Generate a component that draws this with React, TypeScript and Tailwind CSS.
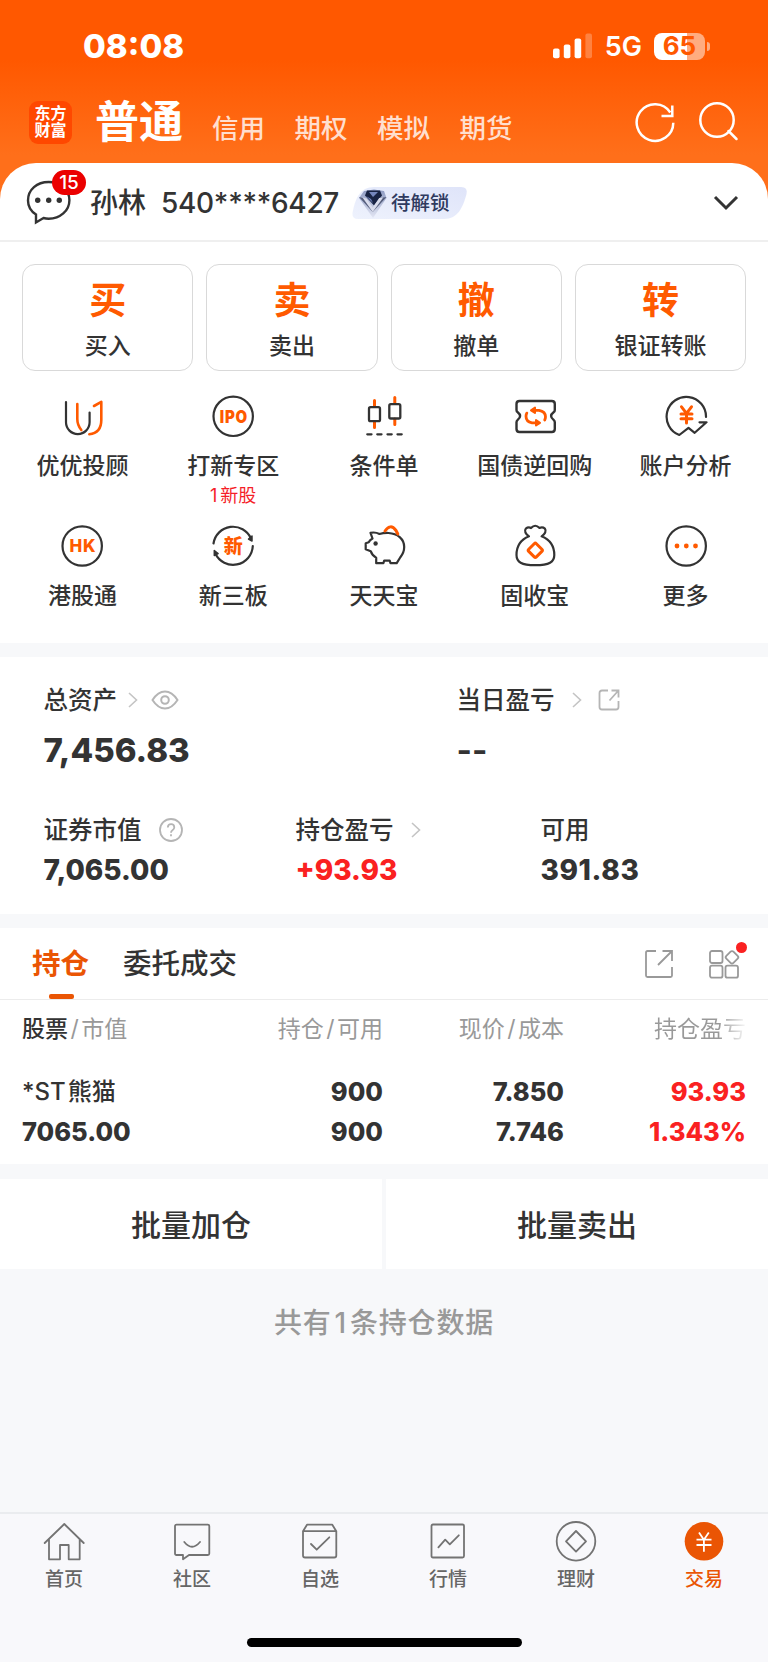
import React from 'react';
import clsx from 'clsx';

const INK = '#333333';
const ORANGE = '#ff5a00';

interface IconProps {
  className?: string;
  children: React.ReactNode;
}

/** 44px line icon canvas shared by the shortcut grid, header and tab bar */
function Icon({ className, children }: IconProps) {
  return (
    <svg
      width="44"
      height="44"
      viewBox="0 0 44 44"
      fill="none"
      strokeLinecap="round"
      strokeLinejoin="round"
      className={clsx('block shrink-0', className)}
      aria-hidden
    >
      {children}
    </svg>
  );
}

function AdvisorIcon() {
  return (
    <Icon>
      <path d="M6 8V28.3a11.8 11.8 0 0 0 23.6 0V18.5" stroke={INK} strokeWidth="2.2" />
      <path d="M17.3 10V25q0 6 4 11" stroke={ORANGE} strokeWidth="2.6" />
      <path d="M34 12l7.3-4.2V26q0 13-12 14.2" stroke={ORANGE} strokeWidth="2.6" />
    </Icon>
  );
}

function IpoIcon() {
  return (
    <Icon>
      <circle cx="22.2" cy="22.3" r="19.7" stroke={INK} strokeWidth="2.2" />
      <text
        x="8.8"
        y="28.5"
        textLength="28"
        lengthAdjust="spacingAndGlyphs"
        fontSize="17"
        fontWeight="900"
        letterSpacing="0.8"
        fill={ORANGE}
      >
        IPO
      </text>
    </Icon>
  );
}

function ConditionIcon() {
  return (
    <Icon>
      <path d="M12.5 6.5V12M12.5 28v5.5M32.8 3.5V9M32.8 25v5.5" stroke={ORANGE} strokeWidth="3" />
      <rect x="7" y="13.2" width="11" height="14" rx="1.5" stroke={INK} strokeWidth="2.3" />
      <rect x="27.3" y="10.2" width="11" height="14.3" rx="1.5" stroke={INK} strokeWidth="2.3" />
      <path d="M5.3 40.3h4.2M15.3 40.3h4.2M25.5 40.3h4.2M35.5 40.3h4.2" stroke={INK} strokeWidth="2.3" />
    </Icon>
  );
}

function RepoIcon() {
  return (
    <Icon>
      <path
        d="M6.5 7H38.8q3 0 3 3v6q0 1.5-1.2 2.3-5 3.7 0 7.6 1.2.9 1.2 2.4V35q0 3-3 3H6.5q-3 0-3-3v-6.7q0-1.5 1.2-2.4 4.8-3.9 0-7.6Q3.5 17.5 3.5 16v-6q0-3 3-3z"
        stroke={INK}
        strokeWidth="2.4"
      />
      <path d="M20 16.3h6q6.5 1 6.5 6.5 0 1.7-.8 3.2M25 28.8h-6q-6-1-6-6.5 0-1.7.8-3.2" stroke={ORANGE} strokeWidth="2.8" />
      <path d="M22 13.6v5.4l-4-2.7zM23 26.1v5.4l4-2.7z" fill={ORANGE} stroke={ORANGE} strokeWidth="2" />
    </Icon>
  );
}

function AnalysisIcon() {
  return (
    <Icon>
      <path d="M42 23A19.7 19.7 0 1 0 15.3 41l9.2-7.2 6.2 5L42.5 28.3H35.5" stroke={INK} strokeWidth="2.2" />
      <path d="M17.5 12.8l5 6.5 5-6.5M17 20h11M17 24.8h11M22.5 19.5V29" stroke={ORANGE} strokeWidth="3" />
    </Icon>
  );
}

function HkIcon() {
  return (
    <Icon>
      <circle cx="22.2" cy="22" r="19.7" stroke={INK} strokeWidth="2.2" />
      <text
        x="9.6"
        y="28.2"
        textLength="26.5"
        lengthAdjust="spacingAndGlyphs"
        fontSize="17.5"
        fontWeight="800"
        letterSpacing="0.6"
        fill={ORANGE}
      >
        HK
      </text>
    </Icon>
  );
}

function NeeqIcon() {
  return (
    <Icon>
      <path d="M2.5 19.5A19.7 19.7 0 0 1 40 14.5M41.8 22A19.7 19.7 0 0 1 4.3 29.5" stroke={INK} strokeWidth="2.2" />
      <path d="M41 12v5l-3.5-2zM3.3 26.5v5l3.8-2z" fill={INK} stroke={INK} strokeWidth="1.5" />
      <text x="22.2" y="28.9" textAnchor="middle" fontSize="19" fontWeight="800" fill={ORANGE}>
        新
      </text>
    </Icon>
  );
}

function PiggyIcon() {
  return (
    <Icon>
      <path
        d="M10.5 14.5L8.5 8.8q5-1 9 1.2 4-1.2 9-1c9 .5 15.7 6 15.7 14 0 5-2 8-4 10.5l-3.5 5.7h-6.2l-.8-2.5h-5.5l-.8 2.5h-7.2v-5.5q-4-2-5.5-6.5l-5-2v-6l3-1q1-2.2 3.8-3.7z"
        stroke={INK}
        strokeWidth="2.2"
      />
      <circle cx="13.6" cy="19.5" r="2.2" fill={INK} />
      <path d="M23 7q5.5-8 11-.5l1.8 3.5" stroke={ORANGE} strokeWidth="3" />
    </Icon>
  );
}

function MoneyBagIcon() {
  return (
    <Icon>
      <path
        d="M16 12.3C12.5 10 11 7 12.8 4.6q2.6-2 5.2-.6 4.2-4.5 8.5 0 3-1.4 5.4.6c1.7 2.4.2 5.4-3.3 7.7 9 3.7 12.7 9.7 12.7 18.7 0 7-5 10.2-19 10.2S3.5 38 3.5 31C3.5 22 7 16 16 12.3z"
        stroke={INK}
        strokeWidth="2.2"
      />
      <rect x="16.9" y="20.9" width="10.8" height="10.8" rx="1.5" transform="rotate(45 22.3 26.3)" stroke={ORANGE} strokeWidth="3" />
    </Icon>
  );
}

function MoreIcon() {
  return (
    <Icon>
      <circle cx="22.2" cy="22" r="19.7" stroke={INK} strokeWidth="2.2" />
      <g fill={ORANGE}>
        <circle cx="13" cy="22" r="2.4" />
        <circle cx="22.3" cy="22" r="2.4" />
        <circle cx="31.5" cy="22" r="2.4" />
      </g>
    </Icon>
  );
}

const MARKETS = ['信用', '期权', '模拟', '期货'];

const ACTIONS = [
  { mark: '买', label: '买入' },
  { mark: '卖', label: '卖出' },
  { mark: '撤', label: '撤单' },
  { mark: '转', label: '银证转账' },
];

const SHORTCUTS = [
  { label: '优优投顾', icon: <AdvisorIcon /> },
  { label: '打新专区', icon: <IpoIcon />, note: { count: 1, text: '新股' } },
  { label: '条件单', icon: <ConditionIcon /> },
  { label: '国债逆回购', icon: <RepoIcon /> },
  { label: '账户分析', icon: <AnalysisIcon /> },
  { label: '港股通', icon: <HkIcon /> },
  { label: '新三板', icon: <NeeqIcon /> },
  { label: '天天宝', icon: <PiggyIcon /> },
  { label: '固收宝', icon: <MoneyBagIcon /> },
  { label: '更多', icon: <MoreIcon /> },
];

const TABS = [
  {
    label: '首页',
    icon: <path d="M2.7 24L22.3 5 41.7 24M7 20.5V40.3H18V26h8.7v14.3h11V20.5" />,
  },
  {
    label: '社区',
    icon: <path d="M6.5 5.7h31.3q1.5 0 1.5 1.5v27.3q0 1.5-1.5 1.5H19l-6 4.3V36H6.5Q5 36 5 34.5V7.2q0-1.5 1.5-1.5zM14.3 23q7.7 9.5 15.7 0" />,
  },
  {
    label: '自选',
    icon: <path d="M5 12.2h33.3v24.3q0 2-2 2H7q-2 0-2-2zM5 12.2l4-6.5h25.3l4 6.5M13 25l5.7 5.7 12.6-12.4" />,
  },
  {
    label: '行情',
    icon: <path d="M7 5.5h29.5q1.5 0 1.5 1.5v30q0 1.5-1.5 1.5H7q-1.5 0-1.5-1.5V7Q5.5 5.5 7 5.5zM12.4 28.3l6.8-7.6 4.6 4.6 9-9" />,
  },
  {
    label: '理财',
    icon: (
      <>
        <circle cx="22" cy="22.3" r="19.3" />
        <path d="M22 12l10 10.3-10 10.3-10-10.3z" />
      </>
    ),
  },
];

function StatusBar() {
  return (
    <div className="flex h-[92px] items-center pl-[83px] pr-[58px] text-white">
      <span className="text-[33px] leading-none font-extrabold">08:08</span>
      <svg width="40" height="26" viewBox="0 0 40 26" fill="#fff" className="ml-auto" aria-hidden>
        <rect x="0" y="15.5" width="6.6" height="9.8" rx="2" />
        <rect x="10.8" y="11.5" width="6.6" height="13.8" rx="2" />
        <rect x="21.6" y="5.5" width="6.6" height="19.8" rx="2" />
        <rect x="32.4" y="0.5" width="6.6" height="24.8" rx="2" opacity="0.25" />
      </svg>
      <span className="ml-3 text-[27px] leading-none font-semibold">5G</span>
      <div className="ml-3 flex h-[27px] w-[51px] items-center justify-center rounded-[8px] bg-[linear-gradient(90deg,#fff_33px,#ffac80_33px)] text-[26px] leading-none font-bold text-[#ff5800]">
        65
      </div>
      <div className="ml-[2px] h-[9px] w-[3px] rounded-r-full bg-white/50" />
    </div>
  );
}

function MarketBar() {
  return (
    <div className="flex h-[60px] items-center pl-[29px] pr-[27px] text-white">
      <div className="flex h-[43px] w-[43px] flex-col items-center justify-center rounded-[9px] bg-[#ff4800] text-[16px] leading-[17.5px] font-bold">
        <span>东方</span>
        <span>财富</span>
      </div>
      <h1 className="ml-[23px] text-[44px] leading-none font-bold">普通</h1>
      <div className="mt-[13px] ml-[29px] flex gap-[29.5px] text-[26.5px] leading-none font-medium text-[#ffdfcf]">
        {MARKETS.map((name) => (
          <span key={name}>{name}</span>
        ))}
      </div>
      <div className="ml-auto flex gap-5">
        <Icon>
          <path d="M40.3 22.7A18.3 18.3 0 1 1 37.3 12.5M39.3 5.5V16H28.5" stroke="#fff" strokeWidth="2.5" strokeLinecap="butt" strokeLinejoin="miter" />
        </Icon>
        <Icon>
          <circle cx="20" cy="20" r="16.7" stroke="#fff" strokeWidth="2.5" />
          <path d="M31.5 31l8 8" stroke="#fff" strokeWidth="2.5" />
        </Icon>
      </div>
    </div>
  );
}

function LevelBadge() {
  return (
    <div className="relative ml-[13px] h-8 w-[116px] pl-[39px] text-[19.5px] leading-[33px] font-medium text-[#2f3a5f]">
      <svg width="116" height="32" viewBox="0 0 116 32" className="absolute inset-0" aria-hidden>
        <defs>
          <linearGradient id="level" x1="0" y1="1" x2="1" y2="0">
            <stop offset="0" stopColor="#eef2fd" />
            <stop offset="1" stopColor="#dfe4f9" />
          </linearGradient>
          <linearGradient id="gem" x1="0" y1="0" x2="0" y2="1">
            <stop offset="0" stopColor="#8d9ac2" />
            <stop offset="1" stopColor="#e3e6f4" />
          </linearGradient>
        </defs>
        <path d="M22 0H109q7 0 5.500 7C111 20 106 32 92 32H6q-6 0-5.500-6C3 12 8 0 22 0z" fill="url(#level)" />
        <path d="M12 4l10-1.500L32 4l2.500 7L21 31 7 11z" fill="url(#gem)" />
        <path d="M15 3.500h13l2 5-8 10-9-10z" fill="#182344" />
        <path d="M17 5l4 5 5-5zM14 9l5 3 2 4z" fill="#7486bd" />
        <path d="M7 10l6 1.500 7.500 11L28 11l6.500-1-13.800 15z" fill="#555e7c" />
        <path d="M10.500 10.500l4 1 6.200 9 6.500-9.500 4-.5-10.500 14.500z" fill="#d9dcec" />
      </svg>
      <span className="relative">待解锁</span>
    </div>
  );
}

function AccountBar() {
  return (
    <div className="flex h-[79px] items-center rounded-t-[36px] border-b-2 border-[#efefef] bg-white pl-[26px] pr-[29px] pt-[2px] text-[28px] leading-none text-[#333]">
      <div className="relative">
        <svg width="46" height="46" viewBox="0 0 46 46" fill="none" className="block" aria-hidden>
          <path
            d="M10 34.5C4.5 31 2 26 2 20.5 2 9.5 11 2 22.7 2S43.4 9.5 43.4 20.2 34 38.7 22.7 38.7q-3 0-5.2-.7L10 42.5z"
            stroke={INK}
            strokeWidth="2.4"
          />
          <g fill={INK}>
            <circle cx="11.7" cy="20.3" r="2.7" />
            <circle cx="22.7" cy="20.3" r="2.7" />
            <circle cx="33.3" cy="20.3" r="2.7" />
          </g>
        </svg>
        <span className="absolute -top-[10px] left-[26px] flex h-[25px] w-[34px] items-center justify-center rounded-full bg-[#eb0000] text-[19px] font-medium text-white">
          15
        </span>
      </div>
      <span className="mt-px ml-[18px] font-medium">孙林</span>
      <span className="mt-px ml-[15px] font-medium tracking-[-0.3px]">540****6427</span>
      <LevelBadge />
      <svg width="26" height="16" viewBox="0 0 26 16" fill="none" className="ml-auto" aria-hidden>
        <path d="M2 2l11 11L24 2" stroke={INK} strokeWidth="3" />
      </svg>
    </div>
  );
}

function Chevron({ className }: { className?: string }) {
  return (
    <svg width="10" height="16" viewBox="0 0 10 16" fill="none" className={className} aria-hidden>
      <path d="M1 1l7.5 7L1 15" stroke="#c4c4c4" strokeWidth="1.6" />
    </svg>
  );
}

function Assets() {
  return (
    <section className="bg-white pt-7 pb-7 pl-[43.5px] text-[24.5px] leading-none font-medium text-[#333]">
      <div className="grid grid-cols-[413px_1fr]">
        <div>
          <div className="flex h-[30px] items-center">
            总资产
            <Chevron className="ml-[11px]" />
            <svg width="28" height="20" viewBox="0 0 28 20" fill="none" stroke="#b5b5b5" strokeWidth="2" className="ml-[13px]" aria-hidden>
              <path d="M1.5 10Q7 1.5 14 1.5T26.500 10Q21 18.5 14 18.5T1.5 10z" />
              <circle cx="14" cy="10" r="3.8" />
            </svg>
          </div>
          <div className="mt-[17px] flex h-9 items-center text-[33px] font-extrabold">7,456.83</div>
        </div>
        <div>
          <div className="flex h-[30px] items-center">
            当日盈亏
            <Chevron className="ml-[17px]" />
            <svg width="22" height="22" viewBox="0 0 22 22" fill="none" stroke="#b5b5b5" strokeWidth="1.8" className="ml-[16px]" aria-hidden>
              <path d="M10 1.5H4q-2.5 0-2.5 2.5v14q0 2.5 2.5 2.5h14q2.5 0 2.5-2.5v-6M13.5 1.5h7v7M20 2l-8.5 9.5" />
            </svg>
          </div>
          <div className="mt-[17px] flex h-9 items-center text-[33px] font-bold">--</div>
        </div>
      </div>
      <div className="mt-[47px] grid grid-cols-[252px_245px_1fr]">
        <div>
          <div className="flex h-[30px] items-center">
            证券市值
            <svg width="24" height="24" viewBox="0 0 24 24" fill="none" stroke="#b5b5b5" strokeWidth="1.8" className="ml-[17px]" aria-hidden>
              <circle cx="12" cy="12" r="11" />
              <path d="M8.8 9.5q.2-3.3 3.3-3.3t3.2 3q0 1.8-1.8 3-1.5 1-1.5 2.5M12 16.3v2" />
            </svg>
          </div>
          <div className="mt-[9px] flex h-8 items-center text-[28px] font-extrabold">7,065.00</div>
        </div>
        <div>
          <div className="flex h-[30px] items-center">
            持仓盈亏
            <Chevron className="ml-[17px]" />
          </div>
          <div className="mt-[9px] flex h-8 items-center text-[28px] font-extrabold text-[#fa2121]">+93.93</div>
        </div>
        <div>
          <div className="flex h-[30px] items-center">可用</div>
          <div className="mt-[9px] flex h-8 items-center text-[28px] font-extrabold tracking-[0.6px]">391.83</div>
        </div>
      </div>
    </section>
  );
}

function Holdings() {
  return (
    <section className="bg-white pb-3 leading-none text-[#333]">
      <div className="flex h-[72px] items-center border-b border-[#ececec] pl-8 pr-[24px] text-[28.5px]">
        <div className="relative flex h-full items-center pt-px font-bold text-[#ea5504]">
          持仓
          <span className="absolute bottom-0 left-[17px] h-[5px] w-[25px] rounded-[2px] bg-[#ea5504]" />
        </div>
        <div className="mt-px ml-[34px] font-medium">委托成交</div>
        <svg width="30" height="30" viewBox="0 0 30 30" fill="none" stroke="#999" strokeWidth="1.8" className="ml-auto" aria-hidden>
          <path d="M12 2H3.5Q2 2 2 3.5v23Q2 28 3.5 28h23q1.5 0 1.5-1.5V18M18.5 2H28v10M28 2L14 16" />
        </svg>
        <div className="relative ml-[34px]">
          <svg width="36" height="30" viewBox="0 0 36 30" fill="none" stroke="#999" strokeWidth="1.8" className="block" aria-hidden>
            <rect x="2" y="2" width="12.5" height="12" rx="2" />
            <rect x="2" y="16.7" width="12.5" height="12" rx="2" />
            <rect x="17.5" y="16.7" width="12.5" height="12" rx="2" />
            <rect x="19" y="3.3" width="10" height="10" rx="2" transform="rotate(45 24 8.3)" />
          </svg>
          <span className="absolute -top-[7px] left-[28px] size-[11px] rounded-full bg-[#fa2121]" />
        </div>
      </div>

      <div className="grid h-[58px] grid-cols-[180px_181px_181px_182px] items-center px-[22px] text-right text-[23px] text-[#999]">
        <div className="text-left">
          <span className="font-medium text-[#333]">股票</span>
          <span className="mx-[2.5px]">/</span>市值
        </div>
        <div>
          持仓<span className="mx-[2.5px]">/</span>可用
        </div>
        <div>
          现价<span className="mx-[2.5px]">/</span>成本
        </div>
        <div className="bg-[linear-gradient(90deg,#999_155px,#fff_184px)] bg-clip-text leading-[30px] text-transparent">
          持仓盈亏
        </div>
      </div>

      <div className="mt-[14px] grid auto-rows-[40px] grid-cols-[180px_181px_181px_182px] items-center px-[22px] text-right text-[25.5px] font-extrabold">
        <div className="text-left text-[24px] font-medium">
          *ST<span className="ml-[2px]">熊猫</span>
        </div>
        <div>900</div>
        <div>7.850</div>
        <div className="text-[#fa2121]">93.93</div>
        <div className="text-left">7065.00</div>
        <div>900</div>
        <div>7.746</div>
        <div className="text-[#fa2121]">1.343%</div>
      </div>
    </section>
  );
}

function TabBar() {
  return (
    <nav className="mt-auto h-[150px] border-t-2 border-[#eaecef] bg-[#f8f8fb]">
      <div className="grid grid-cols-6 pt-[5px] text-[19px] leading-5 font-medium text-[#666]">
        {TABS.map((tab) => (
          <div key={tab.label} className="flex flex-col items-center">
            <Icon>
              <g stroke="#737373" strokeWidth="1.8">
                {tab.icon}
              </g>
            </Icon>
            <span className="mt-[7px]">{tab.label}</span>
          </div>
        ))}
        <div className="flex flex-col items-center text-[#ea5504]">
          <Icon>
            <circle cx="22" cy="22.3" r="19.3" fill="#ea5504" />
            <path d="M17 13.5l4.9 7.2 4.9-7.2M14.5 20.7h15M14.5 26h15M21.9 20.7v12" stroke="#fff" strokeWidth="1.8" strokeLinecap="butt" />
          </Icon>
          <span className="mt-[7px]">交易</span>
        </div>
      </div>
      <div className="mx-auto mt-[48px] h-[9px] w-[275px] rounded-full bg-black" />
    </nav>
  );
}

export default function App() {
  return (
    <div className="flex h-[1662px] w-[768px] flex-col overflow-hidden bg-[#f7f8fa] font-['Inter','Noto_Sans_CJK_SC',sans-serif]">
      <header className="bg-[linear-gradient(180deg,#ff5800_60px,#ff6f1a_155px)]">
        <StatusBar />
        <MarketBar />
        <div className="pt-[11px]">
          <AccountBar />
        </div>
      </header>

      <section className="bg-white text-[#333]">
        <div className="grid grid-cols-4 gap-[13px] px-[22px] pt-[22px]">
          {ACTIONS.map((action) => (
            <div key={action.label} className="flex h-[107px] flex-col items-center rounded-[13px] border border-[#d9d9d9] pt-[13px]">
              <span className="text-[37px] leading-[46px] font-bold text-[#ff5a00]">{action.mark}</span>
              <span className="mt-[9px] text-[23px] leading-[26px] font-medium">{action.label}</span>
            </div>
          ))}
        </div>
        <div className="grid grid-cols-5 grid-rows-[130px_119px] px-[7px] pt-[23px]">
          {SHORTCUTS.map((item) => (
            <div key={item.label} className="flex flex-col items-center">
              {item.icon}
              <span className="mt-[14.5px] text-[23px] leading-[26px] font-medium">{item.label}</span>
              {item.note && (
                <span className="mt-2 text-[18px] leading-[18px] text-[#f51e28]">
                  {item.note.count}
                  <span className="ml-[3px]">{item.note.text}</span>
                </span>
              )}
            </div>
          ))}
        </div>
      </section>

      <div className="mt-[14px]">
        <Assets />
      </div>
      <div className="mt-[14px]">
        <Holdings />
      </div>

      <div className="mt-[15px] grid grid-cols-2 gap-1 text-center text-[30px] leading-[92px] font-medium text-[#333]">
        <div className="h-[90px] bg-white">批量加仓</div>
        <div className="h-[90px] bg-white">批量卖出</div>
      </div>
      <p className="mt-[39px] text-center text-[28px] leading-[30px] font-medium tracking-[0.8px] text-[#999]">
        共有<span className="mx-[3px]">1</span>条持仓数据
      </p>

      <TabBar />
    </div>
  );
}
